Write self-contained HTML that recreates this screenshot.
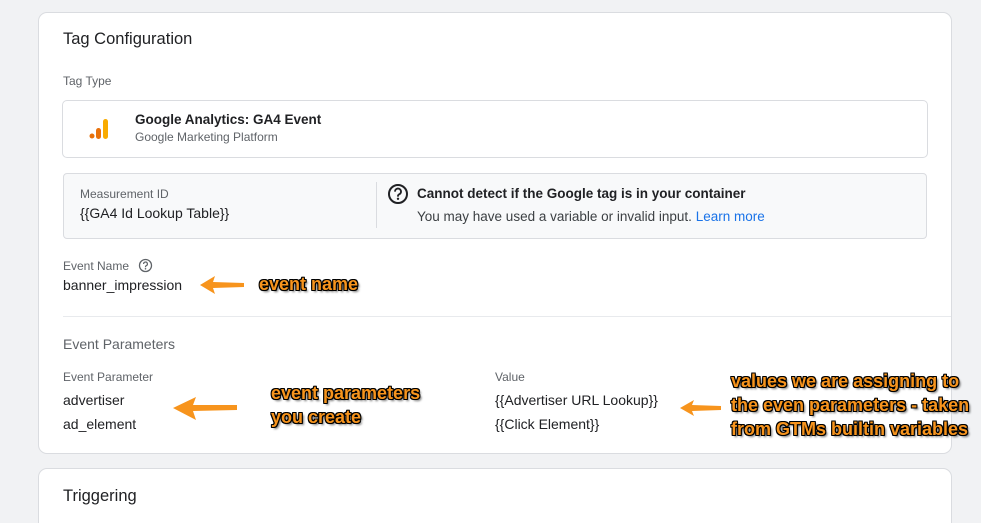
<!DOCTYPE html>
<html><head><style>
*{margin:0;padding:0;box-sizing:border-box}
html,body{width:981px;height:523px;overflow:hidden}
body{background:#f1f2f4;position:relative;font-family:"Liberation Sans",Arial,sans-serif;color:#202124}
.a{position:absolute;white-space:nowrap}
.card{position:absolute;background:#fff;border:1px solid #dadce0;border-radius:9px}
.lbl{font-size:12px;color:#5f6368}
.val{font-size:14px;color:#202124}
.ann{font-family:"Liberation Sans",Arial,sans-serif;font-weight:bold;color:#f7941d;font-size:18px;line-height:24px;letter-spacing:0;text-shadow:-1px -1px 0 #000,1px -1px 0 #000,-1px 1px 0 #000,1px 1px 0 #000,0 1px 0 #000,1px 0 0 #000,-1px 0 0 #000,0 -1px 0 #000,2px 2px 2px rgba(0,0,0,.6)}
</style></head><body>
<div class="card" style="left:38px;top:12px;width:914px;height:442px"></div>
<div class="card" style="left:38px;top:468px;width:914px;height:70px"></div>
<div class="a" style="left:63px;top:30px;font-size:16.5px">Tag Configuration</div>
<div class="a lbl" style="left:63px;top:74px">Tag Type</div>
<div class="a" style="left:62px;top:100px;width:866px;height:58px;border:1px solid #dadce0;border-radius:5px"></div>
<svg class="a" style="left:89px;top:117px" width="22" height="24"><circle cx="3" cy="19" r="2.5" fill="#e8710a"/><rect x="7" y="11" width="5" height="11" rx="2.5" fill="#e8710a"/><rect x="14" y="2" width="5" height="20" rx="2.5" fill="#f9ab00"/></svg>
<div class="a" style="left:135px;top:112px;font-size:13.5px;font-weight:bold;color:#202124">Google Analytics: GA4 Event</div>
<div class="a" style="left:135px;top:130px;font-size:12px;color:#5f6368">Google Marketing Platform</div>
<div class="a" style="left:63px;top:173px;width:864px;height:66px;border:1px solid #dadce0;border-radius:4px;background:#f8f9fa"></div>
<div class="a" style="left:376px;top:182px;width:1px;height:46px;background:#dadce0"></div>
<div class="a lbl" style="left:80px;top:187px">Measurement ID</div>
<div class="a val" style="left:80px;top:205px">{{GA4 Id Lookup Table}}</div>
<svg class="a" style="left:387px;top:183px" width="22" height="22"><circle cx="11" cy="11" r="9" fill="none" stroke="#202124" stroke-width="2"/><path d="M8 8.6a3 3 0 1 1 4.2 2.7c-.8.4-1.2.9-1.2 1.7v.6" fill="none" stroke="#202124" stroke-width="1.9"/><circle cx="11" cy="15.8" r="1.2" fill="#202124"/></svg>
<div class="a" style="left:417px;top:186px;font-size:13.5px;font-weight:bold;color:#202124">Cannot detect if the Google tag is in your container</div>
<div class="a" style="left:417px;top:209px;font-size:13.5px;color:#3c4043">You may have used a variable or invalid input. <span style="color:#1a73e8">Learn more</span></div>
<div class="a lbl" style="left:63px;top:259px">Event Name</div>
<svg class="a" style="left:138px;top:258px" width="15" height="15"><circle cx="7.5" cy="7.5" r="6" fill="none" stroke="#5f6368" stroke-width="1.3"/><path d="M5.6 6a1.9 1.9 0 1 1 2.6 1.7c-.5.3-.7.6-.7 1.1v.4" fill="none" stroke="#5f6368" stroke-width="1.2"/><circle cx="7.5" cy="10.8" r=".8" fill="#5f6368"/></svg>
<div class="a val" style="left:63px;top:277px">banner_impression</div>
<div class="a" style="left:63px;top:316px;width:888px;height:1px;background:#e8eaed"></div>
<div class="a" style="left:63px;top:336px;font-size:14px;color:#5f6368">Event Parameters</div>
<div class="a lbl" style="left:63px;top:370px">Event Parameter</div>
<div class="a val" style="left:63px;top:392px">advertiser</div>
<div class="a val" style="left:63px;top:416px">ad_element</div>
<div class="a lbl" style="left:495px;top:370px">Value</div>
<div class="a val" style="left:495px;top:392px">{{Advertiser URL Lookup}}</div>
<div class="a val" style="left:495px;top:416px">{{Click Element}}</div>
<div class="a" style="left:63px;top:487px;font-size:16.5px">Triggering</div>
<svg class="a" style="left:198px;top:274px" width="50" height="22"><path d="M2 11 L17 2 L15 8 L46 9 L46 13 L15 14 L17 20 Z" fill="#f7941d"/></svg>
<svg class="a" style="left:170px;top:394px" width="70" height="30"><path d="M3 14 L26 3 L23 11 L67 11 L67 16 L23 17 L26 26 Z" fill="#f7941d"/></svg>
<svg class="a" style="left:678px;top:398px" width="46" height="20"><path d="M2 10 L16 2 L14 7 L43 8 L43 12 L14 13 L16 18 Z" fill="#f7941d"/></svg>
<div class="a ann" style="left:259px;top:272px">event name</div>
<div class="a ann" style="left:271px;top:381px">event parameters<br>you create</div>
<div class="a ann" style="left:731px;top:369px">values we are assigning to<br>the even parameters - taken<br>from GTMs builtin variables</div>
</body></html>
